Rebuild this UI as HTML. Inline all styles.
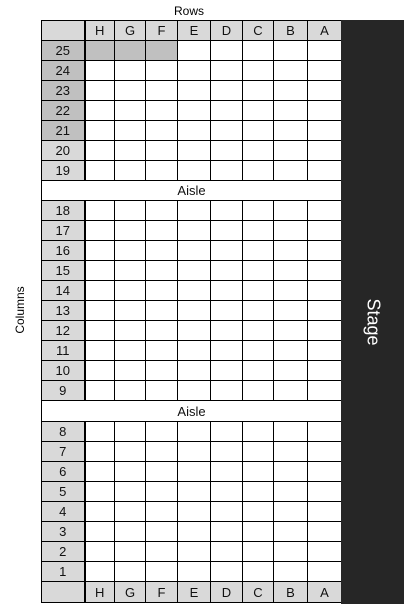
<!DOCTYPE html>
<html><head><meta charset="utf-8"><style>
body{margin:0;width:404px;height:605px;background:#fff;position:relative;font-family:"Liberation Sans",sans-serif;overflow:hidden}
table{position:absolute;left:41px;top:20px;border-collapse:collapse;table-layout:fixed;width:301px}
td{border:1px solid #000;height:19px;padding:0;text-align:center;font-size:13px;color:#111;line-height:15px}
tr.h td{background:#d9d9d9}
td.n{background:#d9d9d9;border-right:2px solid #000}
td.g{background:#c0c0c0}
td.aisle{border-left:1px solid #000;background:#fff;font-size:13px}
#stage{position:absolute;left:341px;top:20px;width:63px;height:584px;background:#262626}
#stage span{position:absolute;left:50%;top:302px;transform:translate(-50%,-50%) rotate(90deg);color:#fff;font-size:18px;white-space:nowrap}
#rows{position:absolute;left:174px;top:4px;font-size:12px}
#cols{position:absolute;left:20px;top:310px;transform:translate(-50%,-50%) rotate(-90deg);font-size:12px}
</style></head><body>
<div id="rows">Rows</div>
<div id="cols">Columns</div>
<table>
<colgroup><col style="width:43px"><col style="width:30px"><col style="width:31px"><col style="width:32px"><col style="width:33px"><col style="width:32px"><col style="width:31px"><col style="width:34px"><col style="width:34px"></colgroup>
<tr class="h"><td class="n"></td><td>H</td><td>G</td><td>F</td><td>E</td><td>D</td><td>C</td><td>B</td><td>A</td></tr>
<tr><td class="n g">25</td><td class="g"></td><td class="g"></td><td class="g"></td><td></td><td></td><td></td><td></td><td></td></tr>
<tr><td class="n g">24</td><td></td><td></td><td></td><td></td><td></td><td></td><td></td><td></td></tr>
<tr><td class="n g">23</td><td></td><td></td><td></td><td></td><td></td><td></td><td></td><td></td></tr>
<tr><td class="n g">22</td><td></td><td></td><td></td><td></td><td></td><td></td><td></td><td></td></tr>
<tr><td class="n g">21</td><td></td><td></td><td></td><td></td><td></td><td></td><td></td><td></td></tr>
<tr><td class="n">20</td><td></td><td></td><td></td><td></td><td></td><td></td><td></td><td></td></tr>
<tr><td class="n">19</td><td></td><td></td><td></td><td></td><td></td><td></td><td></td><td></td></tr>
<tr><td class="aisle" colspan="9">Aisle</td></tr>
<tr><td class="n">18</td><td></td><td></td><td></td><td></td><td></td><td></td><td></td><td></td></tr>
<tr><td class="n">17</td><td></td><td></td><td></td><td></td><td></td><td></td><td></td><td></td></tr>
<tr><td class="n">16</td><td></td><td></td><td></td><td></td><td></td><td></td><td></td><td></td></tr>
<tr><td class="n">15</td><td></td><td></td><td></td><td></td><td></td><td></td><td></td><td></td></tr>
<tr><td class="n">14</td><td></td><td></td><td></td><td></td><td></td><td></td><td></td><td></td></tr>
<tr><td class="n">13</td><td></td><td></td><td></td><td></td><td></td><td></td><td></td><td></td></tr>
<tr><td class="n">12</td><td></td><td></td><td></td><td></td><td></td><td></td><td></td><td></td></tr>
<tr><td class="n">11</td><td></td><td></td><td></td><td></td><td></td><td></td><td></td><td></td></tr>
<tr><td class="n">10</td><td></td><td></td><td></td><td></td><td></td><td></td><td></td><td></td></tr>
<tr><td class="n">9</td><td></td><td></td><td></td><td></td><td></td><td></td><td></td><td></td></tr>
<tr><td class="aisle" colspan="9" style="height:20px">Aisle</td></tr>
<tr><td class="n">8</td><td></td><td></td><td></td><td></td><td></td><td></td><td></td><td></td></tr>
<tr><td class="n">7</td><td></td><td></td><td></td><td></td><td></td><td></td><td></td><td></td></tr>
<tr><td class="n">6</td><td></td><td></td><td></td><td></td><td></td><td></td><td></td><td></td></tr>
<tr><td class="n">5</td><td></td><td></td><td></td><td></td><td></td><td></td><td></td><td></td></tr>
<tr><td class="n">4</td><td></td><td></td><td></td><td></td><td></td><td></td><td></td><td></td></tr>
<tr><td class="n">3</td><td></td><td></td><td></td><td></td><td></td><td></td><td></td><td></td></tr>
<tr><td class="n">2</td><td></td><td></td><td></td><td></td><td></td><td></td><td></td><td></td></tr>
<tr><td class="n">1</td><td></td><td></td><td></td><td></td><td></td><td></td><td></td><td></td></tr>
<tr class="h"><td class="n" style="height:20px"></td><td>H</td><td>G</td><td>F</td><td>E</td><td>D</td><td>C</td><td>B</td><td>A</td></tr>
</table>
<div id="stage"><span>Stage</span></div>
</body></html>
